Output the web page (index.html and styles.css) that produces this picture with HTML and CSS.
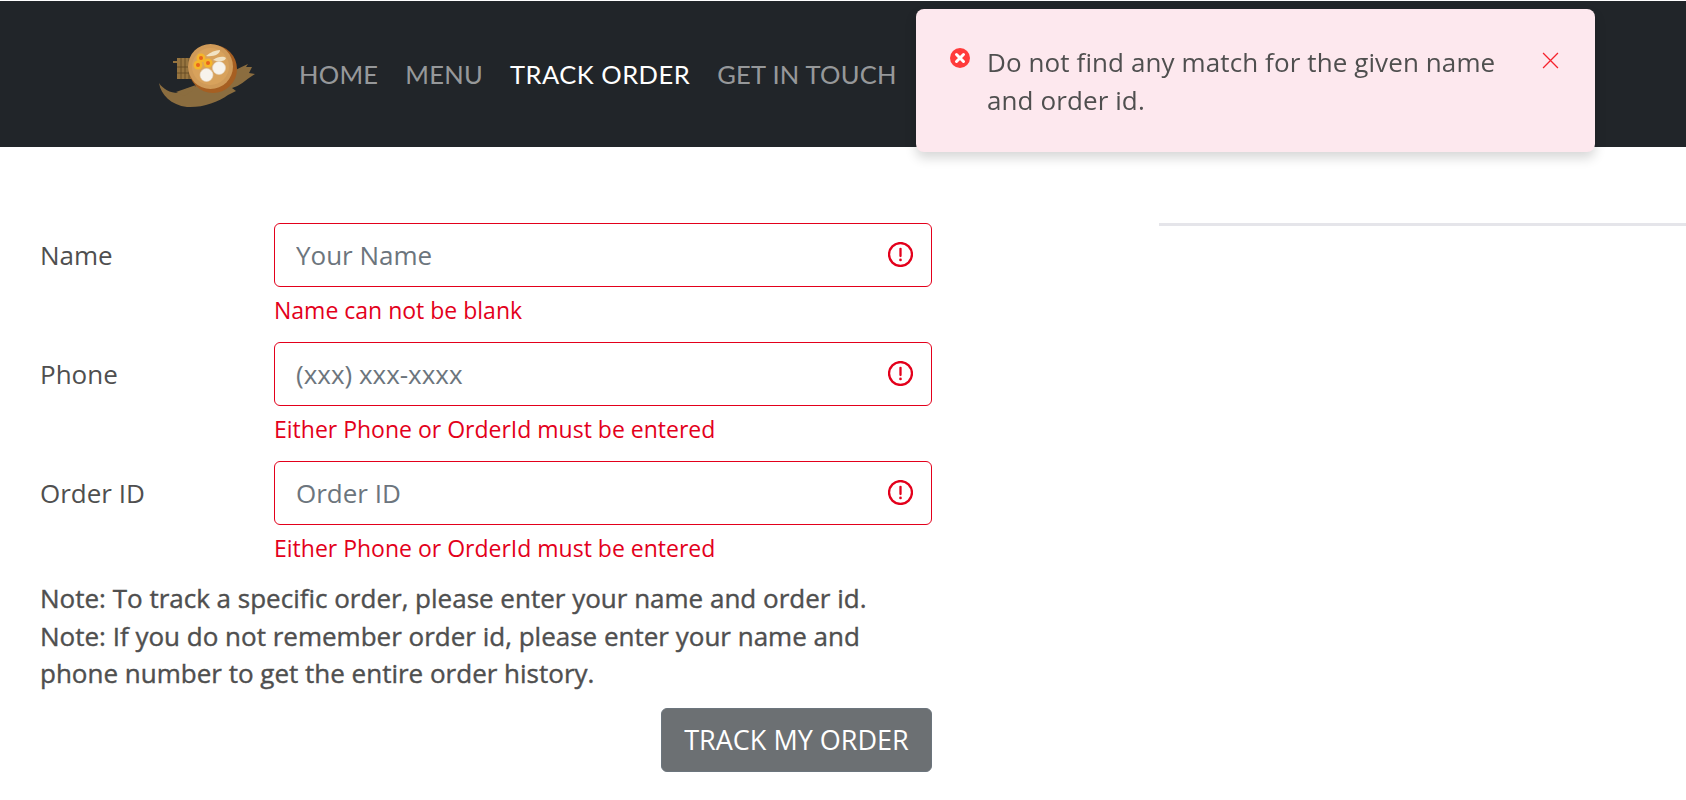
FILE: index.html
```html
<!DOCTYPE html>
<html lang="en">
<head>
  <meta charset="UTF-8">
  <title>Track Order</title>
  <link rel="stylesheet" href="styles.css">
</head>
<body>
  <!-- Navigation Bar -->
  <header class="navbar">
    <svg class="logo" viewBox="0 0 130 100" role="img" aria-label="Logo">
      <path class="brush" d="M19 62 C21 74 31 84 47 86 C62 87 78 81 88 74 L96 70 L92 67 C100 65 104 60 115 53 L109 52 L112 46 L106 46 L108 43 C100 47 92 50 84 55 C72 61 58 64 46 68 L38 72 C30 72 23 68 19 62Z"/>
      <path class="brush" d="M36 71 L56 64 L52 70 L44 75Z"/>
      <g class="tray">
        <rect x="33" y="40" width="18" height="2"/>
        <rect x="37" y="37" width="16" height="21"/>
      </g>
      <path class="tray-lines" d="M41 37V58M45 37V58M49 37V58M37 46H53M37 52H53"/>
      <circle class="bowl-back" cx="73" cy="48" r="24"/>
      <circle class="bowl" cx="70.500" cy="45.500" r="22.500"/>
      <circle class="bowl-in" cx="70.500" cy="45.500" r="18.500"/>
      <circle class="egg" cx="61" cy="37" r="4.500"/><circle class="yolk" cx="61" cy="37" r="2"/>
      <circle class="egg" cx="58" cy="44" r="4.500"/><circle class="yolk" cx="58" cy="44" r="2"/>
      <circle class="egg" cx="68" cy="42" r="4.500"/><circle class="yolk" cx="68" cy="42" r="2"/>
      <path class="dumpling" d="M66 35 C70 31 76 29 80 29 C80 33 74 36 66 35Z"/>
      <path class="dumpling" d="M73 39 C78 35 84 35 86 37 C85 41 78 41 73 39Z"/>
      <circle class="bun" cx="79" cy="47" r="6.500"/>
      <circle class="bun" cx="66.500" cy="54" r="6.500"/>
    </svg>
    <nav>
      <ul class="nav-links">
        <li><a href="#">HOME</a></li>
        <li><a href="#">MENU</a></li>
        <li><a href="#" class="active">TRACK ORDER</a></li>
        <li><a href="#">GET IN TOUCH</a></li>
      </ul>
    </nav>
  </header>

  <!-- Error toast -->
  <div class="toast">
    <svg class="toast-icon" viewBox="0 0 20 20">
      <circle cx="10" cy="10" r="10" fill="#ff3b3b"/>
      <path d="M6.500 6.500L13.500 13.500M13.500 6.500L6.500 13.500" stroke="#fff" stroke-width="3" stroke-linecap="round"/>
    </svg>
    <p>Do not find any match for the given name and order id.</p>
    <svg class="toast-close" viewBox="0 0 16 16">
      <path d="M1 1L15 15M15 1L1 15" stroke="#f5222d" stroke-width="1.2"/>
    </svg>
  </div>

  <!-- MAIN CONTENT -->
  <main class="content">
    <form class="track-form">
      <div class="form-row">
        <label for="name">Name</label>
        <div class="field">
          <div class="input-box">
            <input id="name" type="text" placeholder="Your Name">
            <svg class="invalid-icon" viewBox="0 0 24 24"><circle cx="12" cy="12" r="11"/><path d="M12 6.500V13.500"/><circle class="dot" cx="12" cy="17.200" r="1.300"/></svg>
          </div>
          <div class="error">Name can not be blank</div>
        </div>
      </div>
      <div class="form-row">
        <label for="phone">Phone</label>
        <div class="field">
          <div class="input-box">
            <input id="phone" type="text" placeholder="(xxx) xxx-xxxx">
            <svg class="invalid-icon" viewBox="0 0 24 24"><circle cx="12" cy="12" r="11"/><path d="M12 6.500V13.500"/><circle class="dot" cx="12" cy="17.200" r="1.300"/></svg>
          </div>
          <div class="error">Either Phone or OrderId must be entered</div>
        </div>
      </div>
      <div class="form-row">
        <label for="order">Order ID</label>
        <div class="field">
          <div class="input-box">
            <input id="order" type="text" placeholder="Order ID">
            <svg class="invalid-icon" viewBox="0 0 24 24"><circle cx="12" cy="12" r="11"/><path d="M12 6.500V13.500"/><circle class="dot" cx="12" cy="17.200" r="1.300"/></svg>
          </div>
          <div class="error">Either Phone or OrderId must be entered</div>
        </div>
      </div>
      <p class="note">Note: To track a specific order, please enter your name and order id.<br>Note: If you do not remember order id, please enter your name and phone number to get the entire order history.</p>
      <div class="actions">
        <button type="button" class="track-button">TRACK MY ORDER</button>
      </div>
    </form>
    <div class="side">
      <div class="divider"></div>
    </div>
  </main>
</body>
</html>
```

FILE: styles.css
```css
/* ====== GLOBAL RESET ====== */
* {
  margin: 0;
  padding: 0;
  box-sizing: border-box;
}
ul {
  list-style: none;
}

body {
  font-family: "Open Sans", "Noto Sans", sans-serif;
  background-color: #fff;
  color: #4f4f4f;
  overflow: hidden;
}

/* ====== NAVBAR ====== */
.navbar {
  display: flex;
  align-items: center;
  height: 146px;
  margin-top: 1px;
  padding-left: 140px;
  background-color: #212529;
}
.logo {
  width: 130px;
  height: 100px;
  margin-top: -7px;
  flex-shrink: 0;
}
.brush { fill: #8b6d3f; }
.tray rect { fill: #96743f; }
.tray-lines { stroke: #5f4622; stroke-width: 0.8; fill: none; }
.bowl-back { fill: #a65f22; }
.bowl { fill: #cf9a58; }
.bowl-in { fill: #d8a25c; }
.egg { fill: #f5b62a; }
.yolk { fill: #e8641a; }
.dumpling { fill: #f1e3c4; }
.bun { fill: #f7f3ec; stroke: #e4d5c0; stroke-width: 0.6; }

.nav-links {
  display: flex;
  gap: 27px;
  margin-left: 29px;
}
.nav-links a {
  font-family: "Lato", sans-serif;
  font-size: 25.5px;
  letter-spacing: 0.25px;
  color: rgba(255,255,255,0.55);
  text-decoration: none;
}
.nav-links a.active {
  color: #fff;
  letter-spacing: 0.5px;
}

/* ====== TOAST ====== */
.toast {
  position: fixed;
  top: 9px;
  left: 916px;
  width: 679px;
  height: 143px;
  display: flex;
  align-items: flex-start;
  padding: 35px 36px 0 34px;
  background-color: #fde8ee;
  border-radius: 8px;
  box-shadow: 0 6px 12px rgba(0,0,0,0.16);
}
.toast p {
  flex: 1;
  margin-left: 17px;
  font-size: 26px;
  line-height: 37.5px;
  letter-spacing: 0.1px;
  color: #4f4f4f;
}
.toast-icon {
  width: 20px;
  height: 20px;
  margin-top: 4px;
  flex-shrink: 0;
}
.toast-close {
  width: 17px;
  height: 17px;
  margin-top: 8px;
  margin-left: 40px;
  flex-shrink: 0;
}

/* ====== MAIN CONTENT ====== */
.content {
  display: flex;
  padding: 76px 0 0 40px;
}
.track-form {
  width: 892px;
  flex-shrink: 0;
}
.form-row {
  display: flex;
  margin-bottom: 8px;
}
.form-row label {
  width: 234px;
  flex-shrink: 0;
  font-size: 26px;
  line-height: 64px;
}
.field {
  flex: 1;
}
.input-box {
  position: relative;
}
.input-box input {
  display: block;
  width: 100%;
  height: 64px;
  padding: 0 60px 0 21px;
  font-family: inherit;
  font-size: 26px;
  border: 1.5px solid #e3001b;
  border-radius: 6px;
  outline: none;
}
.input-box input::placeholder {
  color: #6c757d;
  opacity: 1;
}
.invalid-icon {
  position: absolute;
  top: 19px;
  right: 19px;
  width: 25px;
  height: 25px;
  fill: none;
  stroke: #e3001b;
  stroke-width: 2.2;
  stroke-linecap: round;
}
.invalid-icon .dot {
  fill: #e3001b;
  stroke: none;
}
.error {
  height: 47px;
  padding-top: 8px;
  font-size: 23px;
  line-height: 30px;
  color: #e3001b;
}

.note {
  font-size: 26px;
  line-height: 37.5px;
  color: #4f4f4f;
  -webkit-text-stroke: 0.4px #4f4f4f; /* no medium weight installed */
}
.actions {
  display: flex;
  justify-content: flex-end;
  margin-top: 15px;
}
.track-button {
  width: 271px;
  height: 64px;
  font-family: inherit;
  font-size: 27px;
  color: #fff;
  background-color: #6c7073;
  border: 1px solid #6c757d;
  border-radius: 6px;
}

/* ====== RIGHT SIDE ====== */
.side {
  flex: 1;
  padding-left: 227px;
}
.divider {
  height: 3px;
  background-color: #e5e5ea;
}
```
